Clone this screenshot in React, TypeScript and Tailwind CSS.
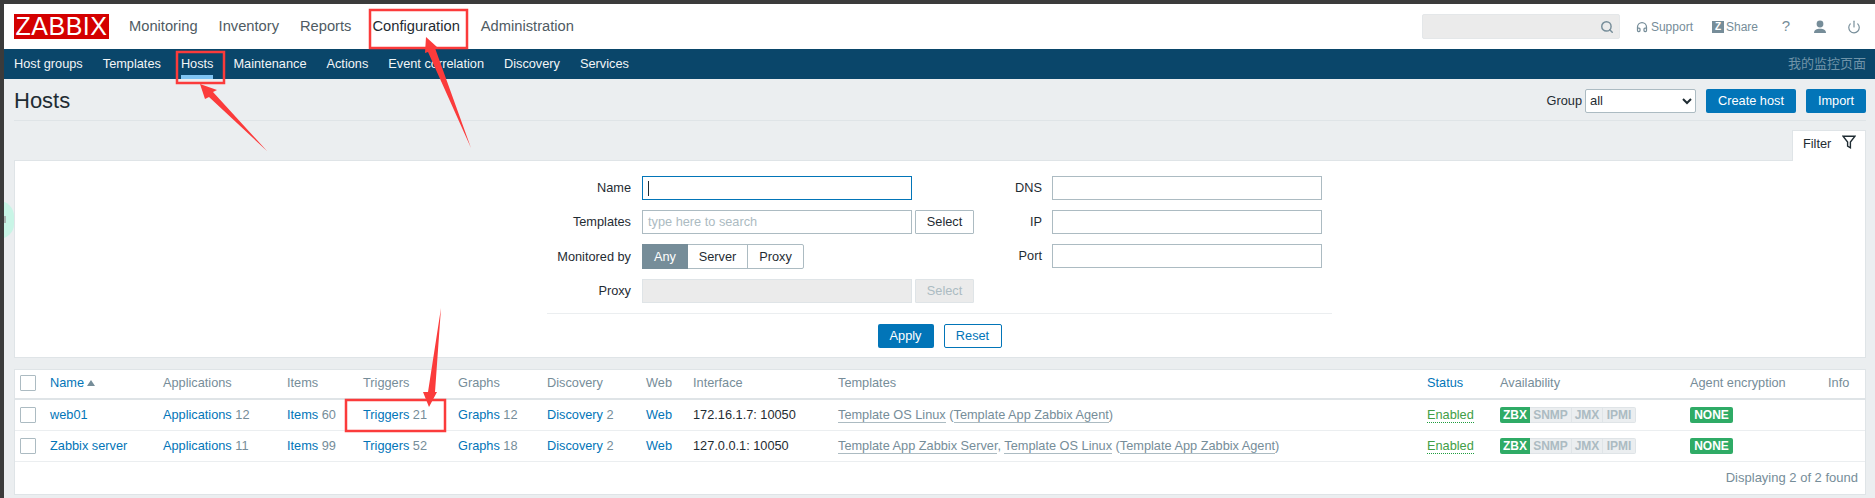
import { Headphones, Power, Search } from "lucide-react";

const topMenu = ["Monitoring", "Inventory", "Reports", "Configuration", "Administration"];
const subMenu = ["Host groups", "Templates", "Hosts", "Maintenance", "Actions", "Event correlation", "Discovery", "Services"];

const columns = [
  { title: "", width: "w-[35px]" },
  { title: "Name", width: "w-[113px]" },
  { title: "Applications", width: "w-[124px]" },
  { title: "Items", width: "w-[76px]" },
  { title: "Triggers", width: "w-[95px]" },
  { title: "Graphs", width: "w-[89px]" },
  { title: "Discovery", width: "w-[99px]" },
  { title: "Web", width: "w-[47px]" },
  { title: "Interface", width: "w-[145px]" },
  { title: "Templates", width: "w-[589px]" },
  { title: "Status", width: "w-[73px]" },
  { title: "Availability", width: "w-[190px]" },
  { title: "Agent encryption", width: "w-[138px]" },
  { title: "Info", width: "w-[37px]" },
];

const hosts = [
  {
    name: "web01",
    apps: 12,
    items: 60,
    triggers: 21,
    graphs: 12,
    discovery: 2,
    iface: "172.16.1.7: 10050",
    templates: ["Template OS Linux"],
    parent: "Template App Zabbix Agent",
  },
  {
    name: "Zabbix server",
    apps: 11,
    items: 99,
    triggers: 52,
    graphs: 18,
    discovery: 2,
    iface: "127.0.0.1: 10050",
    templates: ["Template App Zabbix Server", "Template OS Linux"],
    parent: "Template App Zabbix Agent",
  },
];

function Label({ width, children }: { width: string; children: string }) {
  return <label className={`${width} shrink-0 text-right text-[#1f2c33]`}>{children}</label>;
}

function TextBox({ disabled, placeholder, focused }: { disabled?: boolean; placeholder?: string; focused?: boolean }) {
  return (
    <div
      className={`flex h-6 w-[270px] items-center border px-[5px] ${
        focused ? "border-[#0275b8] bg-white" : disabled ? "border-[#dfe4e7] bg-[#ebebeb]" : "border-[#acbbc2] bg-white"
      }`}
    >
      {focused && <span className="h-[15px] w-px bg-[#1f2c33]" />}
      {placeholder && <span className="text-[#acbbc2]">{placeholder}</span>}
    </div>
  );
}

function LinkCount({ label, count }: { label: string; count: number }) {
  return (
    <span>
      <a className="text-[#0275b8]">{label}</a> <span className="text-[#768d99]">{count}</span>
    </span>
  );
}

function Availability() {
  return (
    <div className="flex h-4 w-[136px] text-[12px] font-bold leading-4">
      <span className="w-[30px] rounded-l-[2px] bg-[#2fab66] text-center text-white">ZBX</span>
      <span className="w-[42px] border-y border-r border-[#dfe4e7] bg-[#ebeef0] text-center leading-[14px] text-[#acbbc2]">SNMP</span>
      <span className="w-[31px] border-y border-r border-[#dfe4e7] bg-[#ebeef0] text-center leading-[14px] text-[#acbbc2]">JMX</span>
      <span className="w-[33px] rounded-r-[2px] border-y border-r border-[#dfe4e7] bg-[#ebeef0] text-center leading-[14px] text-[#acbbc2]">IPMI</span>
    </div>
  );
}

export default function App() {
  return (
    <div className="relative h-[498px] w-[1875px] overflow-hidden bg-[#3b3b3b] pl-[4px] pt-[4px] font-['Liberation_Sans','Noto_Sans_CJK_SC',sans-serif] text-[12.75px]">
      {/* Top header */}
      <header className="flex h-[45px] items-center bg-white pl-[10px] pr-[14px]">
        <div className="flex h-[25px] w-[95px] items-center justify-center bg-[#d40000] text-[25px] leading-none tracking-[0.5px] text-white">
          ZABBIX
        </div>
        <nav className="ml-[20px] flex gap-[21px] text-[14.7px]">
          {topMenu.map((item) => (
            <a key={item} className={item === "Configuration" ? "text-[#1f2c33]" : "text-[#4f5b63]"}>
              {item}
            </a>
          ))}
        </nav>
        <div className="ml-auto flex h-[25px] w-[198px] items-center justify-end rounded-[2px] border border-[#e4e7e9] bg-[#ebebeb] pr-[5px]">
          <Search size={14} strokeWidth={2.5} className="text-[#768d99]" />
        </div>
        <Headphones size={12} strokeWidth={2.5} className="ml-[16px] text-[#768d99]" />
        <span className="ml-[3px] text-[12px] text-[#768d99]">Support</span>
        <span className="ml-[19px] flex h-3 w-3 items-center justify-center bg-[#768d99] text-[10px] font-bold text-white">Z</span>
        <span className="ml-[2px] text-[12px] text-[#768d99]">Share</span>
        <span className="ml-[21px] w-[14px] text-center text-[15px] text-[#768d99]">?</span>
        <svg viewBox="0 0 14 14" className="ml-[20px] h-[14px] w-[14px] fill-[#768d99]">
          <circle cx="7" cy="4" r="3.4" />
          <path d="M1 13c0-3 2.6-4.3 6-4.3s6 1.3 6 4.3z" />
        </svg>
        <Power size={14} strokeWidth={2} className="ml-[20px] text-[#768d99]" />
      </header>

      {/* Second level menu */}
      <nav className="flex h-[30px] items-stretch bg-[#0a466a] pl-[10px] pr-[9px] text-[12.75px] text-[#f2f5f7]">
        <div className="flex gap-[20px]">
          {subMenu.map((item) => (
            <a key={item} className="relative flex items-center">
              {item}
              {item === "Hosts" && <span className="absolute bottom-0 left-0 h-[4px] w-full bg-[#7fc4f2]" />}
            </a>
          ))}
        </div>
        <span className="ml-auto flex items-center text-[13px] text-[#6f93a8]">我的监控页面</span>
      </nav>

      <main className="h-[419px] bg-[#ebeef0] pl-[10px] pr-[9px]">
        {/* Title */}
        <div className="flex h-[42px] items-center border-b border-[#dfe4e7] pt-[2px]">
          <h1 className="text-[22px] font-normal text-[#1f2c33]">Hosts</h1>
          <div className="ml-auto flex items-center text-[#1f2c33]">
            <span>Group</span>
            <select className="ml-[3px] h-6 w-[111px] rounded-[2px] border border-[#acbbc2] bg-white text-[13px] text-[#1f2c33]">
              <option>all</option>
            </select>
            <button className="ml-[10px] h-6 w-[90px] rounded-[2px] bg-[#0275b8] text-white">Create host</button>
            <button className="ml-[10px] h-6 w-[60px] rounded-[2px] bg-[#0275b8] text-white">Import</button>
          </div>
        </div>

        {/* Filter tab */}
        <div className="flex justify-end pt-[9px]">
          <div className="relative -mb-px flex h-[31px] w-[74px] items-start border-x border-t border-[#dfe4e7] bg-white pl-[10px] pt-[3px] text-[#1f2c33]">
            <span>Filter</span>
            <svg viewBox="0 0 14 14" className="ml-[11px] mt-[1px] h-[14px] w-[14px] fill-none stroke-[#1f2c33] stroke-[1.4]">
              <path d="M1 1.2h12L8.4 7v5.8l-2.8-1.6V7z" />
            </svg>
          </div>
        </div>

        {/* Filter form */}
        <section className="h-[198px] border border-[#dfe4e7] bg-white pt-[15px]">
          <div className="ml-[532px] w-[785px]">
            <div className="flex">
              <div className="flex flex-col gap-[10px]">
                <div className="flex h-6 items-center gap-[11px]">
                  <Label width="w-[84px]">Name</Label>
                  <TextBox focused />
                </div>
                <div className="flex h-6 items-center gap-[11px]">
                  <Label width="w-[84px]">Templates</Label>
                  <TextBox placeholder="type here to search" />
                  <button className="-ml-[8px] h-6 w-[59px] rounded-[1px] border border-[#acbbc2] bg-white text-[#1f2c33]">Select</button>
                </div>
                <div className="flex h-[25px] items-center gap-[11px]">
                  <Label width="w-[84px]">Monitored by</Label>
                  <div className="flex h-[25px] rounded-[2px] border border-[#acbbc2] text-center leading-[23px]">
                    <span className="-my-px -ml-px w-[46px] bg-[#768d99] leading-[25px] text-white">Any</span>
                    <span className="w-[60px] border-r border-[#acbbc2] text-[#1f2c33]">Server</span>
                    <span className="w-[55px] text-[#1f2c33]">Proxy</span>
                  </div>
                </div>
                <div className="flex h-6 items-center gap-[11px]">
                  <Label width="w-[84px]">Proxy</Label>
                  <TextBox disabled />
                  <button className="-ml-[8px] h-6 w-[59px] rounded-[1px] border border-[#dfe4e7] bg-[#ebebeb] text-[#acbbc2]">Select</button>
                </div>
              </div>
              <div className="ml-[18px] flex flex-col gap-[10px]">
                {["DNS", "IP", "Port"].map((field) => (
                  <div key={field} className="flex h-6 items-center gap-[10px]">
                    <Label width="w-[50px]">{field}</Label>
                    <div className="h-6 w-[270px] border border-[#acbbc2] bg-white" />
                  </div>
                ))}
              </div>
            </div>
            <div className="mt-[10px] flex justify-center gap-[10px] border-t border-[#ebeef0] pt-[10px]">
              <button className="h-6 w-[56px] rounded-[2px] bg-[#0275b8] text-white">Apply</button>
              <button className="h-6 w-[58px] rounded-[2px] border border-[#0275b8] bg-white text-[#0275b8]">Reset</button>
            </div>
          </div>
        </section>

        {/* Hosts table */}
        <section className="mt-[11px] h-[126px] border border-[#dfe4e7] bg-white">
          <table className="table-fixed border-collapse text-left">
            <colgroup>
              {columns.map((col) => (
                <col key={col.title} className={col.width} />
              ))}
            </colgroup>
            <thead>
              <tr className="h-[29px] border-b-2 border-[#dfe4e7] text-[#768d99]">
                {columns.map((col) => (
                  <th key={col.title} className="p-0 pb-[2px] font-normal">
                    {col.title === "" && <div className="ml-[5px] h-4 w-4 rounded-[1px] border border-[#acbbc2]" />}
                    {col.title === "Name" ? (
                      <span className="inline-flex items-center text-[#0275b8]">
                        Name
                        <span className="ml-[3px] h-0 w-0 border-x-[4px] border-b-[6px] border-x-transparent border-b-[#768d99]" />
                      </span>
                    ) : col.title === "Status" ? (
                      <span className="text-[#0275b8]">Status</span>
                    ) : (
                      col.title
                    )}
                  </th>
                ))}
              </tr>
            </thead>
            <tbody>
              {hosts.map((host) => (
                <tr key={host.name} className="h-[31px] border-b border-[#ebeef0] text-[#1f2c33]">
                  <td className="p-0">
                    <div className="ml-[5px] h-4 w-4 rounded-[1px] border border-[#acbbc2]" />
                  </td>
                  <td className="p-0 text-[#0275b8]">{host.name}</td>
                  <td className="p-0"><LinkCount label="Applications" count={host.apps} /></td>
                  <td className="p-0"><LinkCount label="Items" count={host.items} /></td>
                  <td className="p-0"><LinkCount label="Triggers" count={host.triggers} /></td>
                  <td className="p-0"><LinkCount label="Graphs" count={host.graphs} /></td>
                  <td className="p-0"><LinkCount label="Discovery" count={host.discovery} /></td>
                  <td className="p-0 text-[#0275b8]">Web</td>
                  <td className="p-0">{host.iface}</td>
                  <td className="p-0 text-[#768d99]">
                    {host.templates.map((t, i) => (
                      <span key={t}>
                        <a className="border-b border-[#acbbc2]">{t}</a>
                        {i < host.templates.length - 1 ? ", " : " "}
                      </span>
                    ))}
                    (<a className="border-b border-[#acbbc2]">{host.parent}</a>)
                  </td>
                  <td className="p-0">
                    <a className="border-b border-dotted border-[#1f9d3e] text-[#429e47]">Enabled</a>
                  </td>
                  <td className="p-0"><Availability /></td>
                  <td className="p-0">
                    <span className="block h-4 w-[43px] rounded-[2px] bg-[#2fab66] text-center text-[12px] font-bold leading-4 text-white">NONE</span>
                  </td>
                  <td className="p-0" />
                </tr>
              ))}
            </tbody>
          </table>
          <p className="pr-[7px] pt-[6px] text-right text-[13px] text-[#768d99]">Displaying 2 of 2 found</p>
        </section>
      </main>

      {/* Stray widget peeking in at the left edge */}
      <div className="absolute left-[-16px] top-[201px] h-[38px] w-[30px] rounded-full bg-[#c8f5e6]" />
      <div className="absolute left-0 top-0 h-[498px] w-[4px] bg-[#3b3b3b]" />
      <div className="absolute left-[4px] top-[216px] h-[7px] w-[2px] bg-[#a9b5b2]" />

      {/* Red annotations drawn on top of the screenshot */}
      <svg viewBox="0 0 1875 498" className="pointer-events-none absolute left-0 top-0 h-[498px] w-[1875px]">
        <g fill="none" stroke="#fb3b3b" strokeWidth="2.5">
          <rect x="370" y="10" width="97" height="38" />
          <rect x="177" y="52" width="47" height="31" />
          <rect x="346" y="400" width="99" height="31" />
        </g>
        <g fill="#fb3b3b">
          <polygon points="200,84 217,90 213,92 267,151 209,97 205,99" />
          <polygon points="426,37 437,47 435,48 471,148 428,52 425,53" />
          <polygon points="441,308 435,392 437,392 429,407 423,392 428,392" />
        </g>
      </svg>
    </div>
  );
}
